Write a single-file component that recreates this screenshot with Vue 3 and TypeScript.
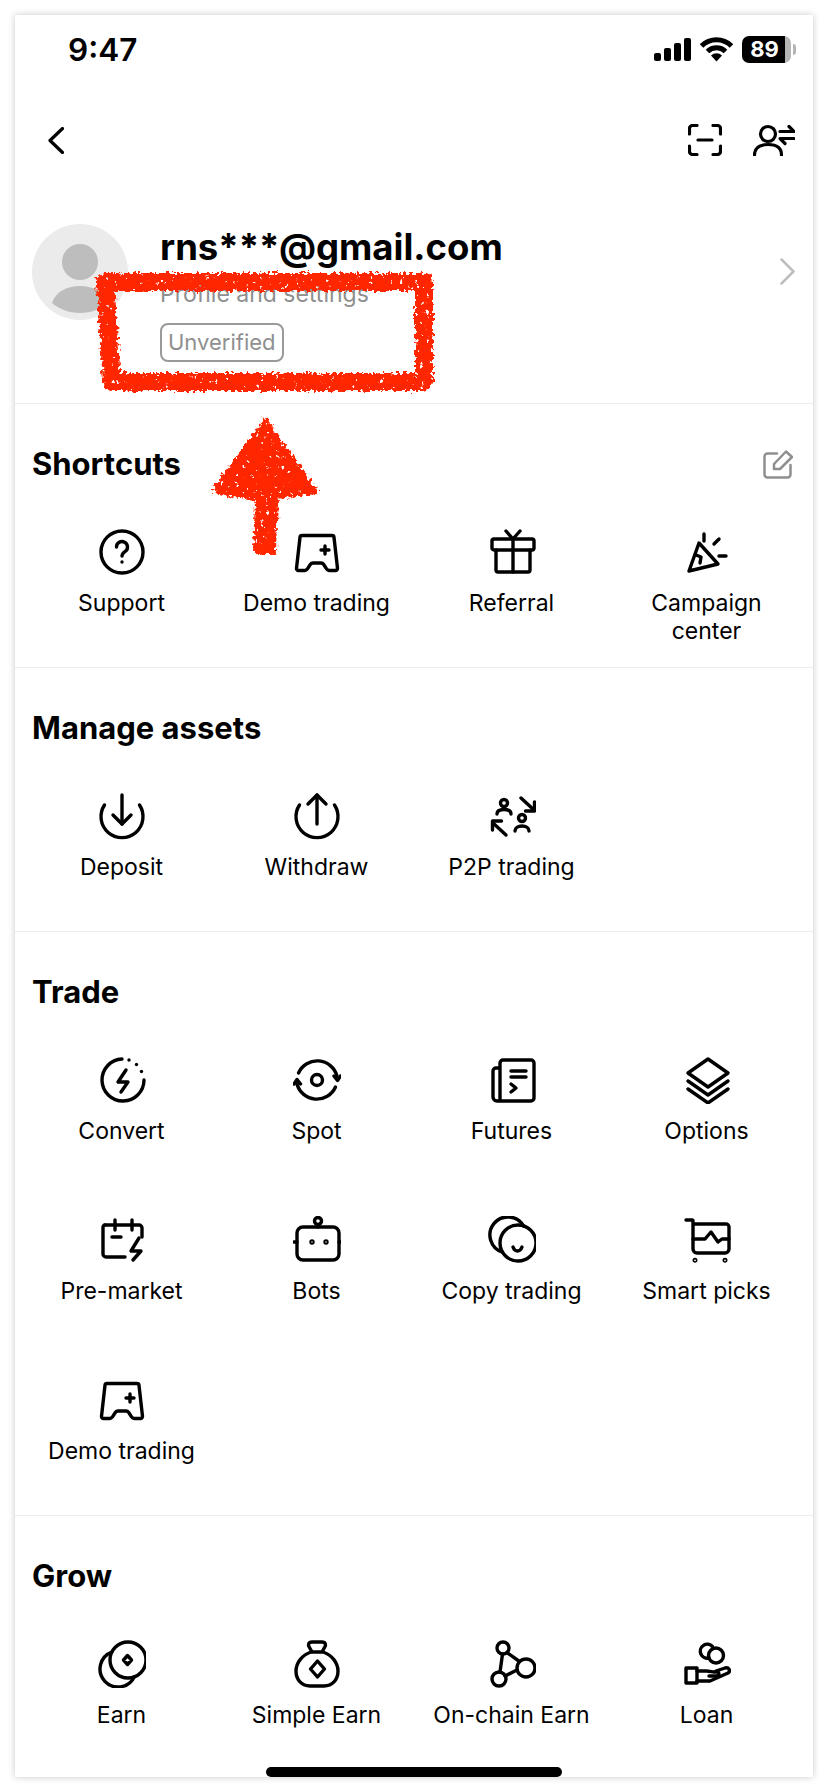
<script setup lang="ts">
interface Item {
  label: string;
  icon: string[];
}
interface Section {
  title: string;
  edit?: boolean;
  items: Item[];
}

// every icon is stroke only, drawn in a 48x48 box
const demo = [
  'M9 7.5h30a2 2 0 0 1 2 1.8l3.5 31a2 2 0 0 1-2 2.2H36c-1 0-1.7-.6-2.3-1.4l-3-4.6c-.7-1-1.5-1.5-2.7-1.5h-8c-1.2 0-2 .5-2.7 1.5l-3 4.6c-.6.8-1.3 1.4-2.3 1.4H5.5a2 2 0 0 1-2-2.2l3.5-31a2 2 0 0 1 2-1.8z',
  'M32 18v8M28 22h8'
];

const sections: Section[] = [
  {
    title: 'Shortcuts',
    edit: true,
    items: [
      {
        label: 'Support',
        icon: [
          'M24 3a21 21 0 1 0 0 42a21 21 0 1 0 0-42z',
          'M18.5 19a5.5 5.5 0 1 1 8.5 4.6c-2 1.3-3 2.2-3 4.4',
          'M24 34v.01'
        ]
      },
      { label: 'Demo trading', icon: demo },
      {
        label: 'Referral',
        icon: [
          'M6 11h38a2 2 0 0 1 2 2v7a2 2 0 0 1-2 2H6a2 2 0 0 1-2-2v-7a2 2 0 0 1 2-2z',
          'M8 22v20a2 2 0 0 0 2 2h30a2 2 0 0 0 2-2V22',
          'M25 11v33',
          'M18 3l7 8 7-8'
        ]
      },
      {
        label: 'Campaign center',
        icon: [
          'M6 43L16 15l19 21z',
          'M13 27l5 2-1 6',
          'M21 6v7',
          'M31 16l5-5',
          'M36 28h7'
        ]
      }
    ]
  },
  {
    title: 'Manage assets',
    items: [
      {
        label: 'Deposit',
        icon: ['M6.5 13a21 21 0 1 0 35 0', 'M24 3v29', 'M15 23l9 9 9-9']
      },
      {
        label: 'Withdraw',
        icon: ['M6.5 13a21 21 0 1 0 35 0', 'M24 3v29', 'M15 12l9-9 9 9']
      },
      {
        label: 'P2P trading',
        icon: [
          'M16 7.500a3.500 3.500 0 1 0 0 7a3.500 3.500 0 1 0 0-7z',
          'M9 22c0-3 3-4.500 7-4.500s7 1.500 7 4.500',
          'M34 22.500a3.500 3.500 0 1 0 0 7a3.500 3.500 0 1 0 0-7z',
          'M27 39c0-3 3-5 7-5s7 2 7 5',
          'M33 6l13 12',
          'M46.500 10v9h-9',
          'M18 43L5 31',
          'M4.500 38v-9h9'
        ]
      }
    ]
  },
  {
    title: 'Trade',
    items: [
      {
        label: 'Convert',
        icon: [
          'M24 3A21 21 0 1 0 46 24',
          'M31 4v.01',
          'M38.500 8.500v.01',
          'M43.500 15.500v.01',
          'M28 14l-8 12h10l-7 10'
        ]
      },
      {
        label: 'Spot',
        icon: [
          'M5.500 17A20.500 20.500 0 0 1 44 20',
          'M41 20l3.500 4.500 3-4.500',
          'M42.500 31A20.500 20.500 0 0 1 4 28',
          'M1 28l3-4.500 3.500 4.500',
          'M24 18.500a5.500 5.500 0 1 0 0 11a5.500 5.500 0 1 0 0-11z'
        ]
      },
      {
        label: 'Futures',
        icon: [
          'M12 45V7a3 3 0 0 1 3-3h28a3 3 0 0 1 3 3v35a3 3 0 0 1-3 3H9a4 4 0 0 1-4-4V15a3 3 0 0 1 3-3h4',
          'M23 15h15',
          'M23 21h15',
          'M23 28l5 4-5 4'
        ]
      },
      {
        label: 'Options',
        icon: [
          'M25 3l20 14-20 14L5 17z',
          'M5 25l20 14 20-14',
          'M5 33l20 14 20-14'
        ]
      },
      {
        label: 'Pre-market',
        icon: [
          'M7 9h34a3 3 0 0 1 3 3v9',
          'M7 9a2 2 0 0 0-2 2v27a3 3 0 0 0 3 3h19',
          'M17 4v10',
          'M34 4v10',
          'M14 21h9',
          'M41 22l-8 13h10l-8 9'
        ]
      },
      {
        label: 'Bots',
        icon: [
          'M10 11h30a6 6 0 0 1 6 6v21a6 6 0 0 1-6 6H10a6 6 0 0 1-6-6V17a6 6 0 0 1 6-6z',
          'M25 1.500a3.500 3.500 0 1 0 0 7a3.500 3.500 0 1 0 0-7z',
          'M25 8.500V11',
          'M1 26h3',
          'M46 26h3',
          'M19 25a1 1 0 1 0 0 2a1 1 0 1 0 0-2z',
          'M33 25a1 1 0 1 0 0 2a1 1 0 1 0 0-2z'
        ]
      },
      {
        label: 'Copy trading',
        icon: [
          'M35.500 9.900A18 18 0 1 0 14.500 36.100',
          'M30 9a18 18 0 1 0 0 36a18 18 0 1 0 0-36z',
          'M25 31c1 3 3 4 4.500 4s3.500-1 4.500-4'
        ]
      },
      {
        label: 'Smart picks',
        icon: [
          'M3 4h6a1 1 0 0 1 1 1v28a4 4 0 0 0 4 4h28a4 4 0 0 0 4-4V11a3 3 0 0 0-3-3H10',
          'M10 23h12l6-7 7 10 4-3h7',
          'M12 43.500a.8.8 0 1 0 0 1.600a.8.8 0 1 0 0-1.600z',
          'M42 43.500a.8.8 0 1 0 0 1.600a.8.8 0 1 0 0-1.600z'
        ]
      },
      { label: 'Demo trading', icon: demo }
    ]
  },
  {
    title: 'Grow',
    items: [
      {
        label: 'Earn',
        icon: [
          'M13.800 12.100A18 18 0 1 0 36.200 36.900',
          'M30 2a18 18 0 1 0 0 36a18 18 0 1 0 0-36z',
          'M29.500 15.500l4 4.500-4 4.500-4-4.500z'
        ]
      },
      {
        label: 'Simple Earn',
        icon: [
          'M19 2h10c3.500 0 4.500 3 2.500 5.500L29 12H19l-2.500-4.500C14.500 5 15.500 2 19 2z',
          'M18 12C9 15 3 23 3 31c0 9 6 15 14 15h14c8 0 14-6 14-15 0-8-6-16-15-19',
          'M24.500 21l7 8-7 8-7-8z'
        ]
      },
      {
        label: 'On-chain Earn',
        icon: [
          'M15 2a6 6 0 1 0 0 12a6 6 0 1 0 0-12z',
          'M38 19a9 9 0 1 0 0 18a9 9 0 1 0 0-18z',
          'M11 32a7 7 0 1 0 0 14a7 7 0 1 0 0-14z',
          'M19 12.500l12.500 9',
          'M14.500 14l-2.500 18',
          'M17 36l12-6'
        ]
      },
      {
        label: 'Loan',
        icon: [
          'M29.500 6.500A7 7 0 1 0 26 18',
          'M33 8a7.500 7.500 0 1 0 0 15a7.500 7.500 0 1 0 0-15z',
          'M3 28h11v15H3z',
          'M14 31h9c4 0 6 1 8 1h3c2 0 3 3 0 4h-8',
          'M14 41h13l18-8c3-2 1-6-3-5l-9 3'
        ]
      }
    ]
  }
];
</script>

<template>
  <div class="page">
    <div class="card">
      <div class="status-bar">
        <span class="time">9:47</span>
        <div class="status-icons">
          <svg class="signal" width="37" height="23" viewBox="0 0 37 23">
            <rect x="0" y="15" width="7" height="8" rx="2" />
            <rect x="10" y="10" width="7" height="13" rx="2" />
            <rect x="20" y="5" width="7" height="18" rx="2" />
            <rect x="30" y="0" width="7" height="23" rx="2" />
          </svg>
          <svg class="wifi" width="33" height="25" viewBox="0 0 33 25">
            <path d="M1.500 9a21 21 0 0 1 30 0" />
            <path d="M7.500 14.500a12.700 12.700 0 0 1 18 0" />
            <path class="wifi-dot" d="M16.500 24.500l-5.500-6a8 8 0 0 1 11 0z" />
          </svg>
          <div class="battery">
            <span>89</span>
            <i class="battery-nub"></i>
          </div>
        </div>
      </div>

      <div class="nav">
        <svg class="nav-back" width="16" height="27" viewBox="0 0 16 27">
          <path d="M14.500 1.500L2 13.500l12.500 12" />
        </svg>
        <div class="nav-right">
          <svg width="34" height="32" viewBox="0 0 34 32">
            <path d="M1.500 10V4.500a3 3 0 0 1 3-3H9" />
            <path d="M25 1.500h4.500a3 3 0 0 1 3 3V10" />
            <path d="M1.500 22v5.500a3 3 0 0 0 3 3H9" />
            <path d="M25 30.500h4.500a3 3 0 0 0 3-3V22" />
            <path d="M10 16h14" />
          </svg>
          <svg width="42" height="32" viewBox="0 0 42 32">
            <path d="M15 2.500a7.500 7.500 0 1 0 0 15a7.500 7.500 0 1 0 0-15z" />
            <path d="M1.500 31c0-7 5-10.500 13.500-10.500S28.500 24 28.500 31" />
            <path d="M27 7.500h14l-5-5" />
            <path d="M41 14.500H27l5 5" />
          </svg>
        </div>
      </div>

      <div class="profile">
        <div class="avatar">
          <svg width="96" height="96" viewBox="0 0 96 96">
            <circle cx="48" cy="48" r="48" fill="#ebebeb" />
            <circle cx="48" cy="38" r="18" fill="#bdbdbd" />
            <path d="M20 79c4-12 16-17 28-17s24 5 28 17c-7 6-17 10-28 10s-21-4-28-10z" fill="#bdbdbd" />
          </svg>
        </div>
        <div class="profile-text">
          <div class="email">rns***@gmail.com</div>
          <div class="sub">Profile and settings</div>
          <div class="badge">Unverified</div>
        </div>
        <svg class="profile-arrow" width="15" height="27" viewBox="0 0 15 27">
          <path d="M1.500 1.500l12 12-12 12" />
        </svg>
      </div>

      <section v-for="section in sections" :key="section.title" class="section">
        <div class="section-head">
          <h2>{{ section.title }}</h2>
          <svg v-if="section.edit" class="edit" width="30" height="30" viewBox="0 0 30 30">
            <path d="M14 4.500H4.500a3 3 0 0 0-3 3v18a3 3 0 0 0 3 3h20a3 3 0 0 0 3-3V16" />
            <path d="M11 15L23 2.500l6 5.500L17 20h-6z" />
          </svg>
        </div>
        <div class="grid">
          <div v-for="item in section.items" :key="item.label" class="item">
            <svg class="icon" width="48" height="48" viewBox="0 0 48 48">
              <path v-for="(d, i) in item.icon" :key="i" :d="d" />
            </svg>
            <span class="label">{{ item.label }}</span>
          </div>
        </div>
      </section>

      <div class="home-bar"></div>
    </div>

    <!-- red marker scribbled on the screenshot -->
    <svg class="scribble" width="828" height="1792" viewBox="0 0 828 1792">
      <defs>
        <filter id="rough" x="-10%" y="-10%" width="120%" height="120%" color-interpolation-filters="sRGB">
          <feTurbulence type="fractalNoise" baseFrequency="0.3" numOctaves="2" seed="4" result="noise" />
          <feDisplacementMap in="SourceGraphic" in2="noise" scale="9" xChannelSelector="R" yChannelSelector="G" result="edge" />
          <feTurbulence type="fractalNoise" baseFrequency="0.2" numOctaves="3" seed="9" />
          <feColorMatrix type="matrix" values="0 0 0 0 0  0 0 0 0 0  0 0 0 0 0  0 0 0 14 -9.800" result="holes" />
          <feComposite in="edge" in2="holes" operator="out" />
        </filter>
      </defs>
      <g filter="url(#rough)">
        <path class="marker" d="M105 282H424V382H112z" />
        <path class="marker-fill" d="M265 420L316 492 276 497 274 552 255 552 257 500 214 490z" />
      </g>
    </svg>
  </div>
</template>

<style scoped>
.page {
  position: relative;
  width: 828px;
  height: 1792px;
  padding: 15px;
  box-sizing: border-box;
  background: #fff;
  overflow: hidden;
  font-family: Inter, "Liberation Sans", sans-serif;
  color: #000;
}

.card {
  position: relative;
  width: 798px;
  height: 1762px;
  background: #fff;
  box-shadow: 0 0 7px rgba(0, 0, 0, 0.22);
  overflow: hidden;
}

.status-bar {
  height: 68px;
  display: flex;
  align-items: center;
  justify-content: space-between;
  padding: 0 22px 0 53px;
}

.time {
  font-size: 31.500px;
  font-weight: 600;
}

.status-icons {
  display: flex;
  align-items: center;
  gap: 9px;
}

.wifi path {
  fill: none;
  stroke: #000;
  stroke-width: 5;
}

.wifi .wifi-dot {
  fill: #000;
  stroke: none;
}

.battery {
  position: relative;
  width: 49px;
  height: 27px;
  border-radius: 7px;
  background: linear-gradient(90deg, #000 88%, #b5b5b5 88%);
  color: #fff;
  font-size: 22px;
  font-weight: 700;
  line-height: 27px;
  text-align: center;
}

.battery span {
  display: block;
  padding-right: 4px;
}

.battery-nub {
  position: absolute;
  right: -5px;
  top: 8px;
  width: 3px;
  height: 11px;
  border-radius: 0 3px 3px 0;
  background: #b5b5b5;
}

.nav {
  height: 114px;
  display: flex;
  align-items: center;
  justify-content: space-between;
  padding: 0 18px 0 33px;
}

.nav-right {
  display: flex;
  align-items: center;
  gap: 31px;
}

.nav svg path {
  fill: none;
  stroke: #000;
  stroke-width: 3.200;
  stroke-linecap: round;
  stroke-linejoin: round;
}

.profile {
  display: flex;
  align-items: flex-start;
  padding: 27px 18px 40px 17px;
  height: 206px;
  box-sizing: border-box;
}

.avatar {
  width: 96px;
  height: 96px;
  flex: none;
}

.profile-text {
  flex: 1;
  margin-left: 32px;
  padding-top: 3px;
}

.email {
  font-size: 36.500px;
  font-weight: 700;
  line-height: 40px;
}

.sub {
  margin-top: 12px;
  font-size: 23px;
  line-height: 30px;
  color: #8f8f8f;
}

.badge {
  display: inline-block;
  margin-top: 14px;
  height: 39px;
  padding: 0 6px;
  box-sizing: border-box;
  border: 2px solid #999;
  border-radius: 8px;
  font-size: 22px;
  line-height: 35px;
  color: #8f8f8f;
}

.profile-arrow {
  margin-top: 34px;
}

.profile-arrow path {
  fill: none;
  stroke: #bdbdbd;
  stroke-width: 2.500;
  stroke-linecap: round;
  stroke-linejoin: round;
}

.section {
  border-top: 1px solid #ececec;
  padding-bottom: 22px;
}

.section-head {
  display: flex;
  align-items: center;
  justify-content: space-between;
  height: 36px;
  padding: 42px 20px 46px 17px;
}

h2 {
  margin: 0;
  font-size: 31px;
  font-weight: 700;
  line-height: 36px;
}

.edit path {
  fill: none;
  stroke: #8f8f8f;
  stroke-width: 2.500;
  stroke-linecap: round;
  stroke-linejoin: round;
}

.grid {
  display: grid;
  grid-template-columns: repeat(4, 195px);
  grid-auto-rows: 117px;
  row-gap: 43px;
  padding-left: 9px;
}

.item {
  display: flex;
  flex-direction: column;
  align-items: center;
}

.icon {
  flex: none;
}

.icon path {
  fill: none;
  stroke: #000;
  stroke-width: 3.400;
  stroke-linecap: round;
  stroke-linejoin: round;
}

.label {
  margin-top: 14px;
  width: 160px;
  font-size: 23px;
  line-height: 27.500px;
  text-align: center;
}

.home-bar {
  position: absolute;
  left: 251px;
  bottom: 0;
  width: 296px;
  height: 10px;
  border-radius: 5px;
  background: #000;
}

.scribble {
  position: absolute;
  left: 0;
  top: 0;
  pointer-events: none;
}

.marker {
  fill: none;
  stroke: #ff2600;
  stroke-width: 18;
  stroke-linejoin: round;
}

.marker-fill {
  fill: #ff2600;
  stroke: #ff2600;
  stroke-width: 4;
  stroke-linejoin: round;
}
</style>
